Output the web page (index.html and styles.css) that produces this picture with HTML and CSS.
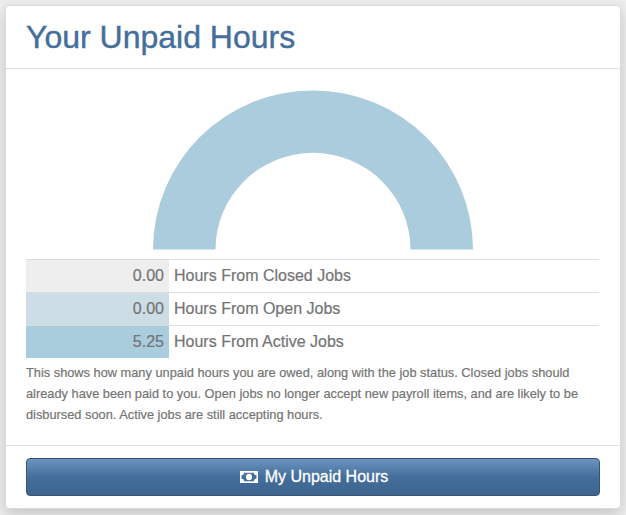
FILE: index.html
```html
<!DOCTYPE html>
<html lang="en">
<head>
<meta charset="utf-8">
<title>Your Unpaid Hours</title>
<link rel="stylesheet" href="styles.css">
</head>
<body>
<section class="card">
  <header class="card-header"><h1>Your Unpaid Hours</h1></header>
  <div class="card-body">
    <svg class="gauge" width="320" height="160" viewBox="0 0 320 160">
      <path d="M0 159.6A160 159.2 0 0 1 320 159.6H257.5A97.5 96.800 0 0 0 62.5 159.6Z" fill="#abccdd"/>
    </svg>
    <table class="hours">
      <tr><td class="amount closed">0.00</td><td class="label">Hours From Closed Jobs</td></tr>
      <tr><td class="amount open">0.00</td><td class="label">Hours From Open Jobs</td></tr>
      <tr><td class="amount active">5.25</td><td class="label">Hours From Active Jobs</td></tr>
    </table>
    <p class="note"><span>This shows how many unpaid hours you are owed, along with the job status. Closed jobs should</span><br><span>already have been paid to you. Open jobs no longer accept new payroll items, and are likely to be</span><br><span>disbursed soon. Active jobs are still accepting hours.</span></p>
  </div>
  <footer class="card-footer">
    <button class="button" type="button">
      <svg class="money" width="18" height="12" viewBox="0 0 18 12">
        <path fill="#fff" fill-rule="evenodd" d="M0 0H18V12H0ZM4.200 1.800A2.600 2.600 0 0 1 1.500 4.200V7.800A2.600 2.600 0 0 1 4.200 10.200H13.800A2.600 2.600 0 0 1 16.500 7.800V4.200A2.600 2.600 0 0 1 13.800 1.800Z"/>
        <ellipse cx="9" cy="6" rx="3" ry="3.200" fill="#fff"/>
      </svg>
      <span>My Unpaid Hours</span>
    </button>
  </footer>
</section>
</body>
</html>
```
FILE: styles.css
```css
* { box-sizing: border-box; }
body {
  margin: 0;
  padding: 5px;
  height: 515px;
  overflow: hidden;
  background: #eee;
  font-family: "Liberation Sans", Arial, sans-serif;
  color: #747474;
  -webkit-text-stroke: 0.2px;
}
.card {
  width: 616px;
  height: 504px;
  background: #fff;
  border: 1px solid #dcdcdc;
  border-radius: 4px;
  box-shadow: 0 5px 15px rgba(0, 0, 0, 0.18);
}
.card-header {
  height: 63px;
  padding: 0 20px;
  border-bottom: 1px solid #ddd;
}
h1 {
  margin: 0;
  font-size: 32px;
  font-weight: 400;
  line-height: 62px;
  color: #446e9b;
  -webkit-text-stroke: 0.4px;
}
.card-body {
  height: 376px;
  padding: 21px 20px 0;
}
.gauge {
  display: block;
  margin: 0 auto;
}
.hours {
  width: 573px;
  margin-top: 9px;
  border-collapse: separate;
  border-spacing: 0;
  font-size: 16px;
}
.hours td {
  height: 33px;
  padding: 0 5px;
  line-height: 32px;
  border-top: 1px solid #ddd;
}
.hours .amount {
  width: 143px;
  text-align: right;
}
.closed { background: #eee; }
.open { background: #ccdde6; }
.active { background: #a9cddd; }
.note {
  margin: 4px 0 0;
  font-size: 12.8px;
  line-height: 21px;
  white-space: nowrap;
}
.card-footer {
  height: 63px;
  padding: 12px 20px;
  border-top: 1px solid #ddd;
}
.button {
  display: flex;
  align-items: center;
  justify-content: center;
  gap: 7px;
  width: 574px;
  height: 38px;
  padding: 0 0 0 2px;
  border: 1px solid #345578;
  border-radius: 4px;
  background: linear-gradient(#6d94bf, #446e9b 50%, #3e648d);
  color: #fff;
  font: 16px "Liberation Sans", Arial, sans-serif;
  -webkit-text-stroke: 0.3px;
}
```
